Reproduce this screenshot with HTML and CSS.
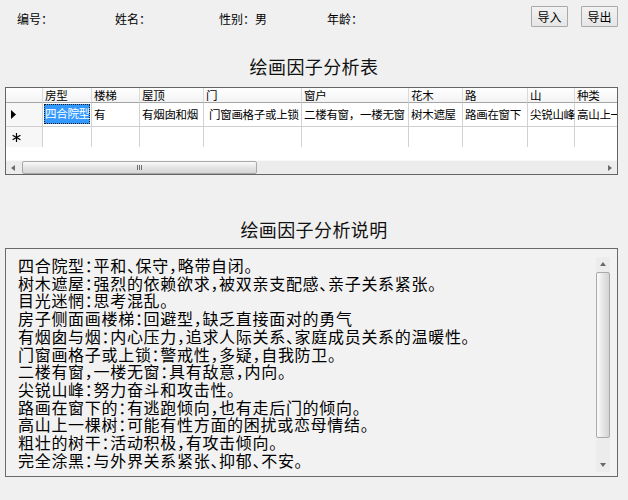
FILE: index.html
```html
<!DOCTYPE html>
<html lang="zh-CN">
<head>
<meta charset="utf-8">
<title>绘画因子分析</title>
<link rel="stylesheet" href="styles.css">
</head>
<body>
<div class="window">
  <div class="topbar">
    <span class="field f1">编号：</span>
    <span class="field f2">姓名：</span>
    <span class="field f3">性别：男</span>
    <span class="field f4">年龄：</span>
    <div class="buttons">
      <button class="btn">导入</button>
      <button class="btn">导出</button>
    </div>
  </div>

  <h1 class="title t1">绘画因子分析表</h1>

  <div class="grid">
    <div class="row head">
      <div class="cell rh"></div>
      <div class="cell w1">房型</div>
      <div class="cell w2">楼梯</div>
      <div class="cell w3">屋顶</div>
      <div class="cell w4">门</div>
      <div class="cell w5">窗户</div>
      <div class="cell w6">花木</div>
      <div class="cell w7">路</div>
      <div class="cell w8">山</div>
      <div class="cell w9">种类</div>
    </div>
    <div class="row data">
      <div class="cell rh"><svg class="mark" width="6" height="9" viewBox="0 0 6 9"><path d="M0 0 L5 4.5 L0 9 Z" fill="#000"/></svg></div>
      <div class="cell w1 sel"><span class="focus">四合院型</span></div>
      <div class="cell w2">有</div>
      <div class="cell w3">有烟囱和烟</div>
      <div class="cell w4 lead">门窗画格子或上锁</div>
      <div class="cell w5">二楼有窗，一楼无窗</div>
      <div class="cell w6">树木遮屋</div>
      <div class="cell w7">路画在窗下</div>
      <div class="cell w8">尖锐山峰</div>
      <div class="cell w9 clip">高山上一棵树</div>
    </div>
    <div class="row newrow">
      <div class="cell rh"><svg class="star" width="9" height="9" viewBox="0 0 9 9"><g stroke="#000" stroke-width="1.2"><line x1="4.5" y1="0" x2="4.5" y2="9"/><line x1="0.6" y1="2.2" x2="8.4" y2="6.8"/><line x1="0.6" y1="6.8" x2="8.4" y2="2.2"/></g></svg></div>
      <div class="cell w1"></div>
      <div class="cell w2"></div>
      <div class="cell w3"></div>
      <div class="cell w4"></div>
      <div class="cell w5"></div>
      <div class="cell w6"></div>
      <div class="cell w7"></div>
      <div class="cell w8"></div>
      <div class="cell w9"></div>
    </div>
    <div class="blank"></div>
    <div class="hscroll">
      <div class="sbtn"><svg width="4" height="6" viewBox="0 0 4 6"><path d="M4 0 L0 3 L4 6 Z" fill="#6a6a6a"/></svg></div>
      <div class="hthumb"><span class="grip"><i></i><i></i><i></i></span></div>
      <div class="htrack"></div>
      <div class="sbtn"><svg width="4" height="6" viewBox="0 0 4 6"><path d="M0 0 L4 3 L0 6 Z" fill="#6a6a6a"/></svg></div>
    </div>
  </div>

  <h2 class="title t2">绘画因子分析说明</h2>

  <div class="memo">
    <div class="memo-text">
      <p>四合院型：平和、保守，略带自闭。</p>
      <p>树木遮屋：强烈的依赖欲求，被双亲支配感、亲子关系紧张。</p>
      <p>目光迷惘：思考混乱。</p>
      <p>房子侧面画楼梯：回避型，缺乏直接面对的勇气</p>
      <p>有烟囱与烟：内心压力，追求人际关系、家庭成员关系的温暖性。</p>
      <p>门窗画格子或上锁：警戒性，多疑，自我防卫。</p>
      <p>二楼有窗，一楼无窗：具有敌意，内向。</p>
      <p>尖锐山峰：努力奋斗和攻击性。</p>
      <p>路画在窗下的：有逃跑倾向，也有走后门的倾向。</p>
      <p>高山上一棵树：可能有性方面的困扰或恋母情结。</p>
      <p>粗壮的树干：活动积极，有攻击倾向。</p>
      <p>完全涂黑：与外界关系紧张、抑郁、不安。</p>
    </div>
    <div class="vscroll">
      <div class="vbtn"><svg width="6" height="4" viewBox="0 0 6 4"><path d="M0 4 L3 0 L6 4 Z" fill="#6a6a6a"/></svg></div>
      <div class="vthumb"></div>
      <div class="vtrack"></div>
      <div class="vbtn"><svg width="6" height="4" viewBox="0 0 6 4"><path d="M0 0 L3 4 L6 0 Z" fill="#6a6a6a"/></svg></div>
    </div>
  </div>
</div>
</body>
</html>
```

FILE: styles.css
```css
html, body {
  margin: 0;
  padding: 0;
  background: #f0f0f0;
}

body {
  font-family: "Noto Sans CJK SC", "Noto Sans", "Liberation Sans", sans-serif;
  font-size: 12px;
  color: #000;
}

.window {
  width: 628px;
  height: 500px;
  overflow: hidden;
}

/* ---------- top bar ---------- */
.topbar {
  display: flex;
  align-items: flex-start;
  padding: 6px 10px 0 17px;
  height: 20px;
}

.field {
  margin-top: 6px;
  line-height: 14px;
  font-size: 12px;
  white-space: nowrap;
}

.f1 { width: 98px; }
.f2 { width: 104px; }
.f3 { width: 108px; }
.f4 { width: 60px; }

.buttons {
  margin-left: auto;
  display: flex;
  gap: 13px;
}

.btn {
  width: 37px;
  height: 21px;
  padding: 0;
  margin: 0;
  border: 1px solid #a9a9a9;
  border-radius: 1px;
  background: linear-gradient(#f2f2f2, #e6e6e6);
  font-family: inherit;
  font-size: 12px;
  line-height: 17px;
  color: #000;
}

/* ---------- titles ---------- */
.title {
  margin: 0;
  font-size: 18px;
  font-weight: 400;
  line-height: 24px;
  text-align: center;
  color: #111;
  letter-spacing: 0.4px;
}

.t1 { margin-top: 28px; }
.t2 { margin-top: 42px; }

/* ---------- data grid ---------- */
.grid {
  margin: 9px 0 0 5px;
  width: 613px;
  box-sizing: border-box;
  border: 1px solid #646464;
  background: #fff;
  overflow: hidden;
}

.row {
  display: flex;
}

.cell {
  flex-shrink: 0;
  box-sizing: border-box;
  border-right: 1px solid #d2d2d2;
  padding-left: 2px;
  white-space: nowrap;
  font-size: 11.5px;
  letter-spacing: -0.3px;
}

.clip { overflow: hidden; }

.rh { width: 37px; background: #f7f7f7; padding-left: 0; }
.w1 { width: 49px; }
.w2 { width: 48px; }
.w3 { width: 64px; }
.w4 { width: 98px; }
.w5 { width: 107px; }
.w6 { width: 54px; }
.w7 { width: 65px; }
.w8 { width: 47px; }
.w9 { width: 60px; border-right: none; }

.head .cell {
  height: 15px;
  line-height: 14px;
  border-bottom: 1px solid #a5a5a5;
  background: linear-gradient(#ffffff, #f3f3f3);
  border-right-color: #dadada;
}

.data .cell {
  height: 24px;
  line-height: 23px;
  border-bottom: 1px solid #cfcfcf;
}

.data .rh, .newrow .rh {
  display: flex;
  align-items: center;
  padding-left: 5px;
}

.newrow .cell {
  height: 20px;
}

.newrow .rh { padding-left: 6px; }

.lead { padding-left: 5px; }

.sel {
  padding: 1px 1px 2px 1px;
}

.focus {
  display: block;
  height: 100%;
  box-sizing: border-box;
  background: #3399ff;
  color: #fff;
  outline: 1px dotted #1a1a1a;
  outline-offset: -1px;
  line-height: 19px;
  padding-left: 1px;
}

.blank {
  height: 13px;
  background: #fff;
}

.hscroll {
  display: flex;
  align-items: stretch;
  height: 13px;
  background: #ececec;
  border-top: 1px solid #f8f8f8;
}

.sbtn {
  width: 14px;
  display: flex;
  align-items: center;
  justify-content: center;
}

.hthumb {
  width: 235px;
  margin-left: 2px;
  box-sizing: border-box;
  border: 1px solid #a9a9a9;
  border-radius: 2px;
  background: linear-gradient(#fafafa, #e2e2e2 55%, #d6d6d6);
  display: flex;
  align-items: center;
  justify-content: center;
}

.grip {
  display: flex;
  gap: 1px;
}

.grip i {
  display: block;
  width: 1px;
  height: 5px;
  background: #6f6f6f;
}

.htrack { flex: 1; }

/* ---------- memo ---------- */
.memo {
  display: flex;
  margin: 7px 0 0 5px;
  width: 613px;
  height: 229px;
  box-sizing: border-box;
  border: 1px solid #6a6a6a;
  background: #f2f2f2;
}

.memo-text {
  flex: 1;
  padding: 8px 0 0 12px;
  font-size: 16px;
  line-height: 17.7px;
  letter-spacing: 0.7px;
  font-feature-settings: "halt";
  color: #000;
}

.memo-text p {
  margin: 0;
  white-space: nowrap;
}

.vscroll {
  width: 14px;
  margin: 8px 7px 4px 0;
  display: flex;
  flex-direction: column;
  background: #ececec;
}

.vbtn {
  height: 14px;
  display: flex;
  align-items: center;
  justify-content: center;
}

.vthumb {
  height: 166px;
  margin-top: 1px;
  box-sizing: border-box;
  border: 1px solid #a9a9a9;
  border-radius: 2px;
  background: linear-gradient(90deg, #fbfbfb, #e4e4e4 55%, #d4d4d4);
}

.vtrack { flex: 1; }
```
